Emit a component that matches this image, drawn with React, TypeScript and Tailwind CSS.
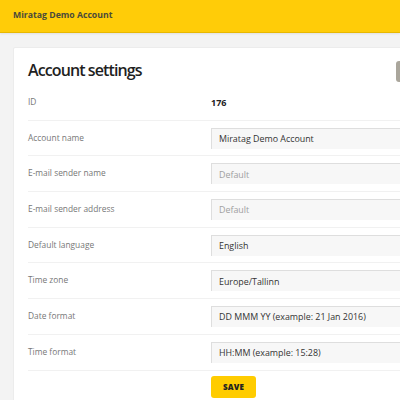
import React from 'react';

const rows: { label: string; value?: string; placeholder?: string; plain?: boolean }[] = [
  { label: 'ID', value: '176', plain: true },
  { label: 'Account name', value: 'Miratag Demo Account' },
  { label: 'E-mail sender name', placeholder: 'Default' },
  { label: 'E-mail sender address', placeholder: 'Default' },
  { label: 'Default language', value: 'English' },
  { label: 'Time zone', value: 'Europe/Tallinn' },
  { label: 'Date format', value: 'DD MMM YY (example: 21 Jan 2016)' },
  { label: 'Time format', value: 'HH:MM (example: 15:28)' },
];

export default function App() {
  return (
    <div
      className="w-[400px] h-[400px] overflow-hidden bg-[#f3f3f3]"
      style={{ fontFamily: '"Open Sans", "Noto Sans", sans-serif' }}
    >
      <header className="h-[33px] bg-[#ffcc08] border-b border-[#e8b800] shadow-[0_1px_2px_rgba(0,0,0,0.08)] flex items-center px-[13px]">
        <span className="text-[8.7px] font-bold text-[#4a4a3a]">Miratag Demo Account</span>
      </header>

      <div className="pl-[13px] pt-[14px]">
        <div className="relative w-[420px] bg-white border border-[#ececec] rounded-tl-[2px] pl-[14px] pt-[10px] pb-[20px]">
          <div className="absolute left-[382px] top-[13px] w-[20px] h-[21px] rounded-[3px] bg-[#aaa69c]" />
          <h1 className="text-[16px] leading-[24px] font-semibold text-[#1f1f1f] tracking-[-0.9px]">Account settings</h1>
          <div className="mt-[3px]">
            {rows.map((r) => (
              <div key={r.label} className="h-[35.7px] border-b border-[#f1f1f1] flex items-center">
                <div className="w-[183px] text-[8.4px] text-[#777]">{r.label}</div>
                {r.plain ? (
                  <div className="text-[9px] font-bold text-[#222]">{r.value}</div>
                ) : (
                  <div className="flex-1 h-[21px] bg-[#f7f7f7] border-t border-l border-[#dedede] flex items-center pl-[7px]">
                    {r.value ? (
                      <span className="text-[8.9px] text-[#333]">{r.value}</span>
                    ) : (
                      <span className="text-[8.9px] text-[#a0a0a0]">{r.placeholder}</span>
                    )}
                  </div>
                )}
              </div>
            ))}
          </div>
          <button className="ml-[183px] mt-[5px] w-[45px] h-[22px] rounded-[3px] bg-[#ffcc00] text-[8px] font-extrabold text-[#222] tracking-[0.2px]">
            SAVE
          </button>
        </div>
      </div>
    </div>
  );
}
